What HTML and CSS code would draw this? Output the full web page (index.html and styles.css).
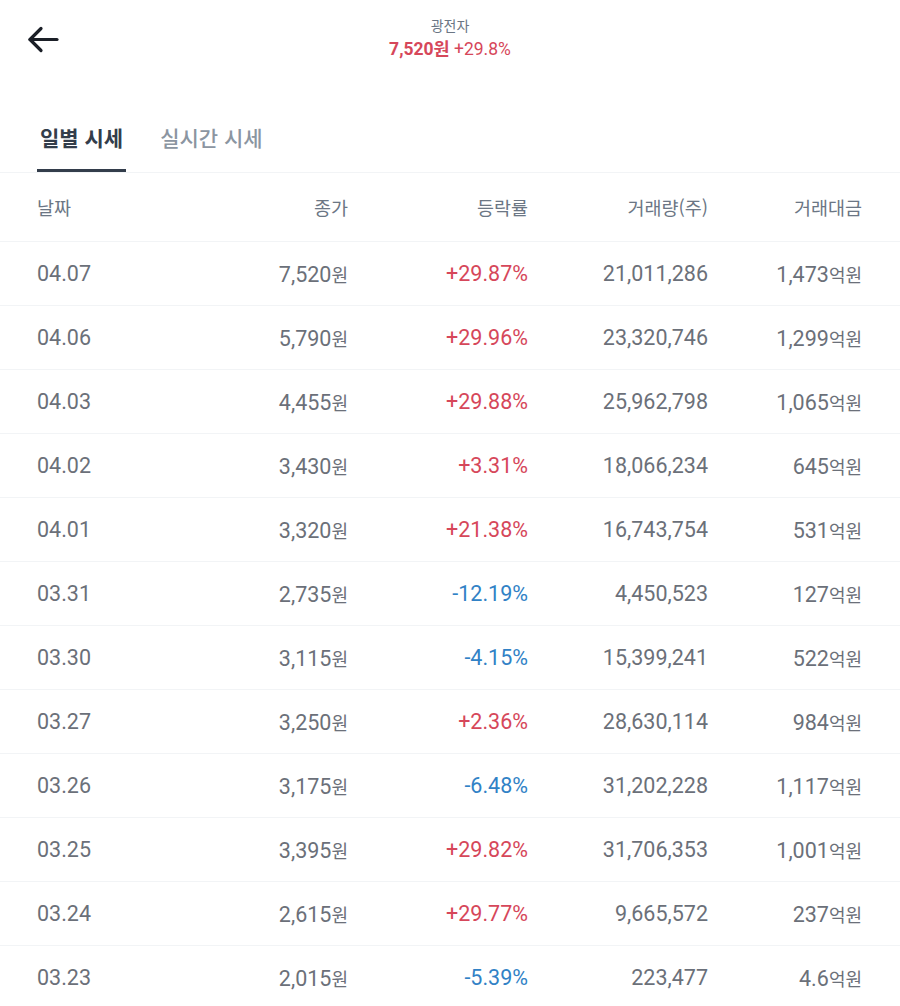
FILE: index.html
```html
<!DOCTYPE html>
<html lang="ko">
<head>
<meta charset="utf-8">
<title>광전자 일별 시세</title>
<link rel="stylesheet" href="styles.css">
</head>
<body>
<header class="topbar">
  <button class="back" aria-label="뒤로">
    <svg width="34" height="30" viewBox="0 0 34 30" fill="none" stroke="#1b1f27" stroke-width="3.2" stroke-linecap="round" stroke-linejoin="round">
      <path d="M4 13.5H31"/>
      <path d="M15 2.5L4 13.5L15 24.5"/>
    </svg>
  </button>
  <div class="title">
    <div class="name">광전자</div>
    <div class="price"><strong>7,520원</strong> +29.8%</div>
  </div>
  <div></div>
</header>

<nav class="tabs">
  <div class="tab active">일별 시세</div>
  <div class="tab">실시간 시세</div>
</nav>

<div class="table">
  <div class="row head">
    <div class="c date">날짜</div>
    <div class="c">종가</div>
    <div class="c">등락률</div>
    <div class="c">거래량(주)</div>
    <div class="c">거래대금</div>
  </div>
  <div class="row"><div class="c date">04.07</div><div class="c">7,520<span class="u">원</span></div><div class="c up">+29.87%</div><div class="c">21,011,286</div><div class="c">1,473<span class="u">억원</span></div></div>
  <div class="row"><div class="c date">04.06</div><div class="c">5,790<span class="u">원</span></div><div class="c up">+29.96%</div><div class="c">23,320,746</div><div class="c">1,299<span class="u">억원</span></div></div>
  <div class="row"><div class="c date">04.03</div><div class="c">4,455<span class="u">원</span></div><div class="c up">+29.88%</div><div class="c">25,962,798</div><div class="c">1,065<span class="u">억원</span></div></div>
  <div class="row"><div class="c date">04.02</div><div class="c">3,430<span class="u">원</span></div><div class="c up">+3.31%</div><div class="c">18,066,234</div><div class="c">645<span class="u">억원</span></div></div>
  <div class="row"><div class="c date">04.01</div><div class="c">3,320<span class="u">원</span></div><div class="c up">+21.38%</div><div class="c">16,743,754</div><div class="c">531<span class="u">억원</span></div></div>
  <div class="row"><div class="c date">03.31</div><div class="c">2,735<span class="u">원</span></div><div class="c down">-12.19%</div><div class="c">4,450,523</div><div class="c">127<span class="u">억원</span></div></div>
  <div class="row"><div class="c date">03.30</div><div class="c">3,115<span class="u">원</span></div><div class="c down">-4.15%</div><div class="c">15,399,241</div><div class="c">522<span class="u">억원</span></div></div>
  <div class="row"><div class="c date">03.27</div><div class="c">3,250<span class="u">원</span></div><div class="c up">+2.36%</div><div class="c">28,630,114</div><div class="c">984<span class="u">억원</span></div></div>
  <div class="row"><div class="c date">03.26</div><div class="c">3,175<span class="u">원</span></div><div class="c down">-6.48%</div><div class="c">31,202,228</div><div class="c">1,117<span class="u">억원</span></div></div>
  <div class="row"><div class="c date">03.25</div><div class="c">3,395<span class="u">원</span></div><div class="c up">+29.82%</div><div class="c">31,706,353</div><div class="c">1,001<span class="u">억원</span></div></div>
  <div class="row"><div class="c date">03.24</div><div class="c">2,615<span class="u">원</span></div><div class="c up">+29.77%</div><div class="c">9,665,572</div><div class="c">237<span class="u">억원</span></div></div>
  <div class="row"><div class="c date">03.23</div><div class="c">2,015<span class="u">원</span></div><div class="c down">-5.39%</div><div class="c">223,477</div><div class="c">4.6<span class="u">억원</span></div></div>
</div>
</body>
</html>
```

FILE: styles.css
```css
* { box-sizing: border-box; }
html, body {
  margin: 0;
  background: #ffffff;
  font-family: "Roboto", "Noto Sans CJK KR", sans-serif;
  color: #4e5968;
}

.topbar {
  display: grid;
  grid-template-columns: 1fr auto 1fr;
  align-items: start;
  height: 95px;
  padding: 16px 0 0 0;
}
.back {
  justify-self: start;
  margin: 10px 0 0 26px;
  padding: 0;
  border: 0;
  background: none;
  width: 34px;
  height: 30px;
}
.back svg { display: block; }
.title { text-align: center; }
.name {
  font-size: 14px;
  line-height: 20px;
  color: #6b7684;
}
.price {
  margin-top: 1px;
  font-size: 17.5px;
  line-height: 24px;
  color: #d6475a;
}
.price strong { font-weight: 700; }

.tabs {
  display: flex;
  gap: 31px;
  padding: 0 0 0 37px;
  border-bottom: 1px solid #f2f4f6;
}
.tab {
  padding: 28px 3px 18px 3px;
  font-family: "Noto Sans CJK KR", sans-serif;
  font-size: 21px;
  line-height: 28px;
  color: #8b95a1;
  font-weight: 500;
  border-bottom: 3px solid transparent;
}
.tab.active {
  color: #333d4b;
  font-weight: 700;
  border-bottom-color: #333d4b;
}

.row {
  display: grid;
  grid-template-columns: 131px 180px 180px 180px 154px;
  align-items: center;
  padding: 0 0 0 37px;
  height: 64px;
  border-bottom: 1px solid #f2f4f6;
  font-size: 21.5px;
  color: #6b7079;
}
.row.head {
  height: 69px;
  font-family: "Noto Sans CJK KR", sans-serif;
  font-size: 18.5px;
  color: #6b7684;
}
.c { text-align: right; white-space: nowrap; }
.c.date { text-align: left; }
.u {
  font-family: "Noto Sans CJK KR", sans-serif;
  font-size: 18px;
}
.up { color: #d6475a; }
.down { color: #3182c6; }
```
